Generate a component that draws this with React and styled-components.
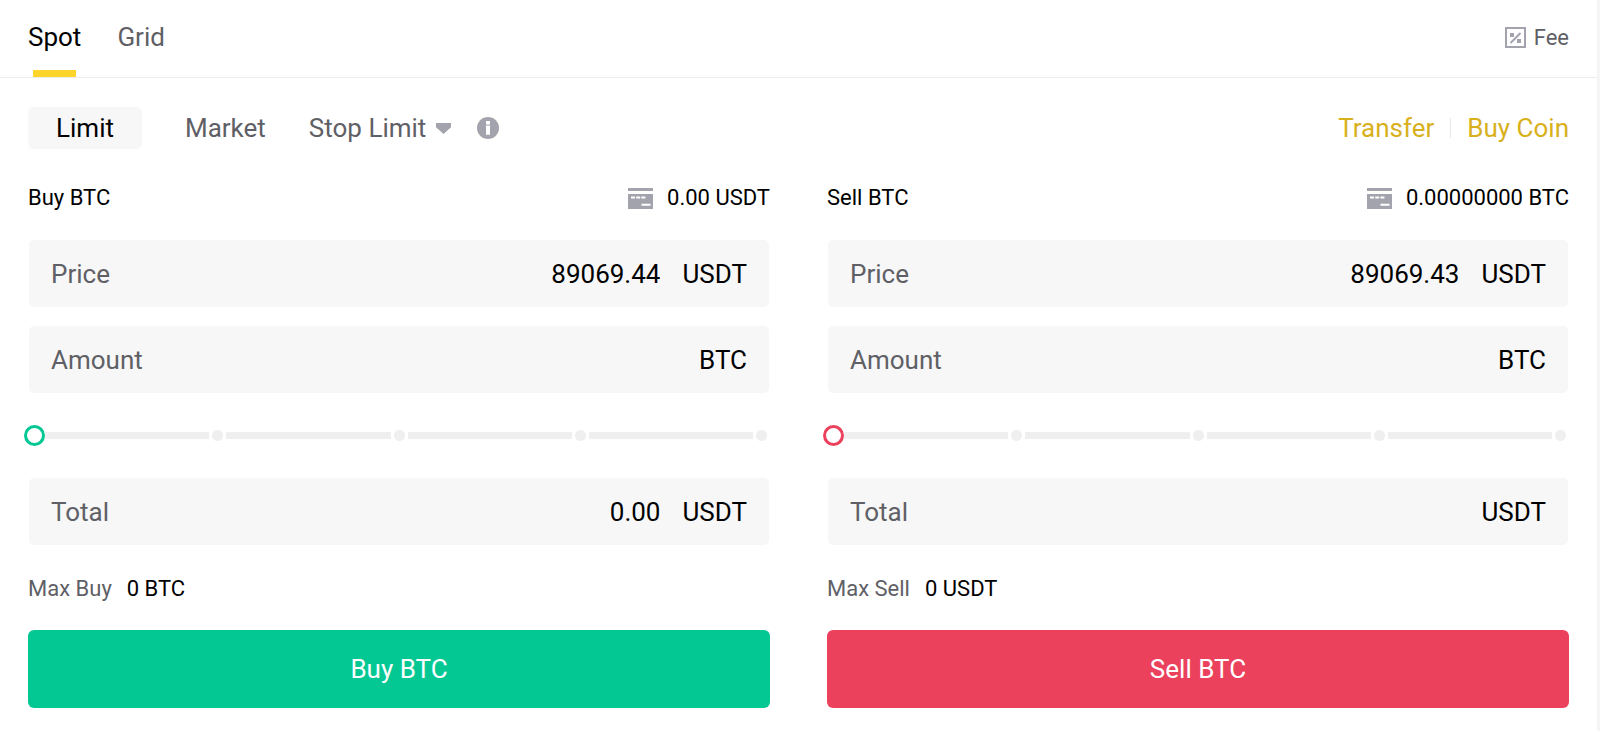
import React, { useState } from "react";
import styled, { createGlobalStyle } from "styled-components";

const orderSides = [
  {
    id: "buy",
    title: "Buy BTC",
    balance: "0.00 USDT",
    price: "89069.44",
    total: "0.00",
    maxLabel: "Max Buy",
    max: "0 BTC",
    color: "#04c894",
  },
  {
    id: "sell",
    title: "Sell BTC",
    balance: "0.00000000 BTC",
    price: "89069.43",
    total: "",
    maxLabel: "Max Sell",
    max: "0 USDT",
    color: "#ec415c",
  },
];

function FeeIcon() {
  return (
    <svg width="21" height="21" viewBox="0 0 21 21" fill="none" aria-hidden="true">
      <rect x="1" y="1" width="19" height="19" stroke="#a3a3ad" strokeWidth="2" />
      <rect x="5" y="6" width="4" height="4" fill="#a3a3ad" />
      <rect x="12" y="12" width="4" height="4" fill="#a3a3ad" />
      <path d="M5.5 16L15.5 6" stroke="#a3a3ad" strokeWidth="2" />
    </svg>
  );
}

function CardIcon() {
  return (
    <svg width="25" height="21" viewBox="0 0 25 21" aria-hidden="true">
      <path d="M0 0h25v3H0zM0 6h25v15H0z" fill="#a3a3ad" />
      <path d="M3 8.5h4v2H3zM8.2 8.5h4v2h-4zM13.4 8.5h4v2h-4zM13.5 15.8h9v2h-9z" fill="#fff" />
    </svg>
  );
}

function CaretIcon() {
  return (
    <svg width="15" height="11" viewBox="0 0 15 11" aria-hidden="true">
      <path d="M0 0h15v4.2L7.5 11 0 4.2z" fill="#a3a3ad" />
    </svg>
  );
}

function InfoIcon() {
  return (
    <svg width="22" height="22" viewBox="0 0 22 22" aria-hidden="true">
      <circle cx="11" cy="11" r="11" fill="#a3a3ad" />
      <path d="M9 4h4v3.6H9zM9 8.6h4v9.2H9z" fill="#fff" />
    </svg>
  );
}

function Header() {
  const [tab, setTab] = useState("Spot");
  return (
    <HeaderBar>
      <Tabs>
        {["Spot", "Grid"].map((name) => (
          <Tab key={name} $active={tab === name} onClick={() => setTab(name)}>
            {name}
          </Tab>
        ))}
      </Tabs>
      <FeeLink href="#fee">
        <FeeIcon />
        Fee
      </FeeLink>
    </HeaderBar>
  );
}

function OrderTypes() {
  const [type, setType] = useState("Limit");
  return (
    <TypeBar>
      <TypeList>
        <TypeButton $active={type === "Limit"} onClick={() => setType("Limit")}>
          Limit
        </TypeButton>
        <PlainButton $active={type === "Market"} onClick={() => setType("Market")}>
          Market
        </PlainButton>
        <PlainButton
          $active={type === "Stop"}
          aria-haspopup="menu"
          onClick={() => setType("Stop")}
        >
          Stop Limit
          <CaretIcon />
        </PlainButton>
        <InfoButton aria-label="About order types">
          <InfoIcon />
        </InfoButton>
      </TypeList>
      <Links>
        <GoldLink href="#transfer">Transfer</GoldLink>
        <Divider />
        <GoldLink href="#buy-coin">Buy Coin</GoldLink>
      </Links>
    </TypeBar>
  );
}

function Field({ label, unit, value, onChange }) {
  return (
    <FieldBox>
      <FieldLabel>{label}</FieldLabel>
      <FieldInput
        type="text"
        inputMode="decimal"
        value={value}
        onChange={(e) => onChange(e.target.value)}
      />
      <Unit>{unit}</Unit>
    </FieldBox>
  );
}

function PercentSlider({ color, label }) {
  const [percent, setPercent] = useState(0);
  return (
    <SliderBox>
      <Track />
      <Marks>
        {[0, 25, 50, 75, 100].map((mark) => (
          <Mark key={mark} />
        ))}
      </Marks>
      <Range
        type="range"
        min="0"
        max="100"
        aria-label={label}
        value={percent}
        $color={color}
        onChange={(e) => setPercent(Number(e.target.value))}
      />
    </SliderBox>
  );
}

function OrderForm({ side }) {
  const [price, setPrice] = useState(side.price);
  const [amount, setAmount] = useState("");
  const [total, setTotal] = useState(side.total);
  return (
    <Form onSubmit={(e) => e.preventDefault()}>
      <FormHead>
        <Title>{side.title}</Title>
        <Balance>
          <CardIcon />
          {side.balance}
        </Balance>
      </FormHead>
      <Fields>
        <Field label="Price" unit="USDT" value={price} onChange={setPrice} />
        <Field label="Amount" unit="BTC" value={amount} onChange={setAmount} />
      </Fields>
      <PercentSlider color={side.color} label={side.title + " percent"} />
      <Fields>
        <Field label="Total" unit="USDT" value={total} onChange={setTotal} />
      </Fields>
      <MaxRow>
        <MaxLabel>{side.maxLabel}</MaxLabel>
        <span>{side.max}</span>
      </MaxRow>
      <Submit type="submit" $color={side.color}>
        {side.title}
      </Submit>
    </Form>
  );
}

function App() {
  return (
    <Panel>
      <GlobalStyle />
      <Header />
      <Content>
        <OrderTypes />
        <Forms>
          {orderSides.map((side) => (
            <OrderForm key={side.id} side={side} />
          ))}
        </Forms>
      </Content>
    </Panel>
  );
}

export default App;

const GlobalStyle = createGlobalStyle`
  * {
    box-sizing: border-box;
  }
  body {
    margin: 0;
    background-color: #fff;
    color: #000;
    font-family: Roboto, "Liberation Sans", sans-serif;
    font-size: 26px;
    line-height: 30px;
  }
  button, input {
    margin: 0;
    padding: 0;
    border: 0;
    background: none;
    color: inherit;
    font: inherit;
  }
  button {
    cursor: pointer;
  }
  a {
    text-decoration: none;
  }
`;

const Panel = styled.main`
  min-height: 100vh;
  border-right: 3px solid #f5f5f5;
`;

const HeaderBar = styled.header`
  display: flex;
  justify-content: space-between;
  padding: 0 28px;
  border-bottom: 1px solid #ececee;
`;

const Tabs = styled.nav`
  display: flex;
  gap: 36px;
`;

const Tab = styled.button`
  display: flex;
  flex-direction: column;
  align-items: center;
  padding-top: 22px;
  color: ${(props) => (props.$active ? "#000" : "#5f6066")};

  &::after {
    content: "";
    width: 43px;
    height: 7px;
    margin-top: 18px;
    background-color: ${(props) => (props.$active ? "#ffd42b" : "transparent")};
  }
`;

const FeeLink = styled.a`
  display: flex;
  align-items: center;
  gap: 8px;
  padding-bottom: 2px;
  color: #5f6066;
  font-size: 22px;
`;

const Content = styled.div`
  padding: 29px 28px 22px;
`;

const TypeBar = styled.div`
  display: flex;
  align-items: center;
  justify-content: space-between;
`;

const TypeList = styled.div`
  display: flex;
  align-items: center;
`;

const TypeButton = styled.button`
  height: 42px;
  padding: 0 28px;
  border-radius: 6px;
  background-color: ${(props) => (props.$active ? "#f7f7f7" : "transparent")};
  color: ${(props) => (props.$active ? "#000" : "#5f6066")};
`;

const PlainButton = styled.button`
  display: flex;
  align-items: center;
  gap: 10px;
  margin-left: 43px;
  color: ${(props) => (props.$active ? "#000" : "#5f6066")};
`;

const InfoButton = styled.button`
  display: flex;
  margin-left: 26px;
`;

const Links = styled.div`
  display: flex;
  align-items: center;
  gap: 16px;
`;

const GoldLink = styled.a`
  color: #d8b01c;
`;

const Divider = styled.span`
  width: 1px;
  height: 20px;
  background-color: #e8e8e8;
`;

const Forms = styled.div`
  display: grid;
  grid-template-columns: 1fr 1fr;
  gap: 57px;
  margin-top: 34px;
`;

const Form = styled.form`
  display: flex;
  flex-direction: column;
`;

const FormHead = styled.div`
  display: flex;
  align-items: center;
  justify-content: space-between;
  margin-bottom: 27px;
  font-size: 22px;
`;

const Title = styled.h2`
  margin: 0;
  font-size: 22px;
  font-weight: 400;
`;

const Balance = styled.div`
  display: flex;
  align-items: center;
  gap: 14px;
`;

const Fields = styled.div`
  display: flex;
  flex-direction: column;
  gap: 19px;
  padding: 0 1px;
`;

const FieldBox = styled.label`
  display: flex;
  align-items: center;
  height: 67px;
  padding: 0 22px;
  border-radius: 5px;
  background-color: #f7f7f7;
`;

const FieldLabel = styled.span`
  color: #5f6066;
`;

const FieldInput = styled.input`
  flex: 1;
  min-width: 0;
  margin: 0 22px;
  text-align: right;
  outline: none;
`;

const Unit = styled.span`
  color: #000;
`;

const SliderBox = styled.div`
  display: grid;
  align-items: center;
  margin: 32px 0;

  & > * {
    grid-area: 1 / 1;
  }
`;

const Track = styled.div`
  height: 7px;
  background-color: #efefef;
`;

const Marks = styled.div`
  display: flex;
  justify-content: space-between;
`;

const Mark = styled.span`
  width: 17px;
  height: 17px;
  border: 3px solid #fff;
  border-radius: 3px;
  background: radial-gradient(circle, #efefef 5px, #fff 6px);
`;

const Range = styled.input`
  appearance: none;
  height: 21px;
  margin-left: -4px;

  &::-webkit-slider-thumb {
    appearance: none;
    width: 21px;
    height: 21px;
    border: 3px solid ${(props) => props.$color};
    border-radius: 50%;
    background-color: #fff;
  }
`;

const MaxRow = styled.div`
  display: flex;
  gap: 15px;
  margin: 29px 0 26px;
  font-size: 22px;
`;

const MaxLabel = styled.span`
  color: #5f6066;
`;

const Submit = styled.button`
  height: 78px;
  border-radius: 6px;
  background-color: ${(props) => props.$color};
  color: #fff;
`;
